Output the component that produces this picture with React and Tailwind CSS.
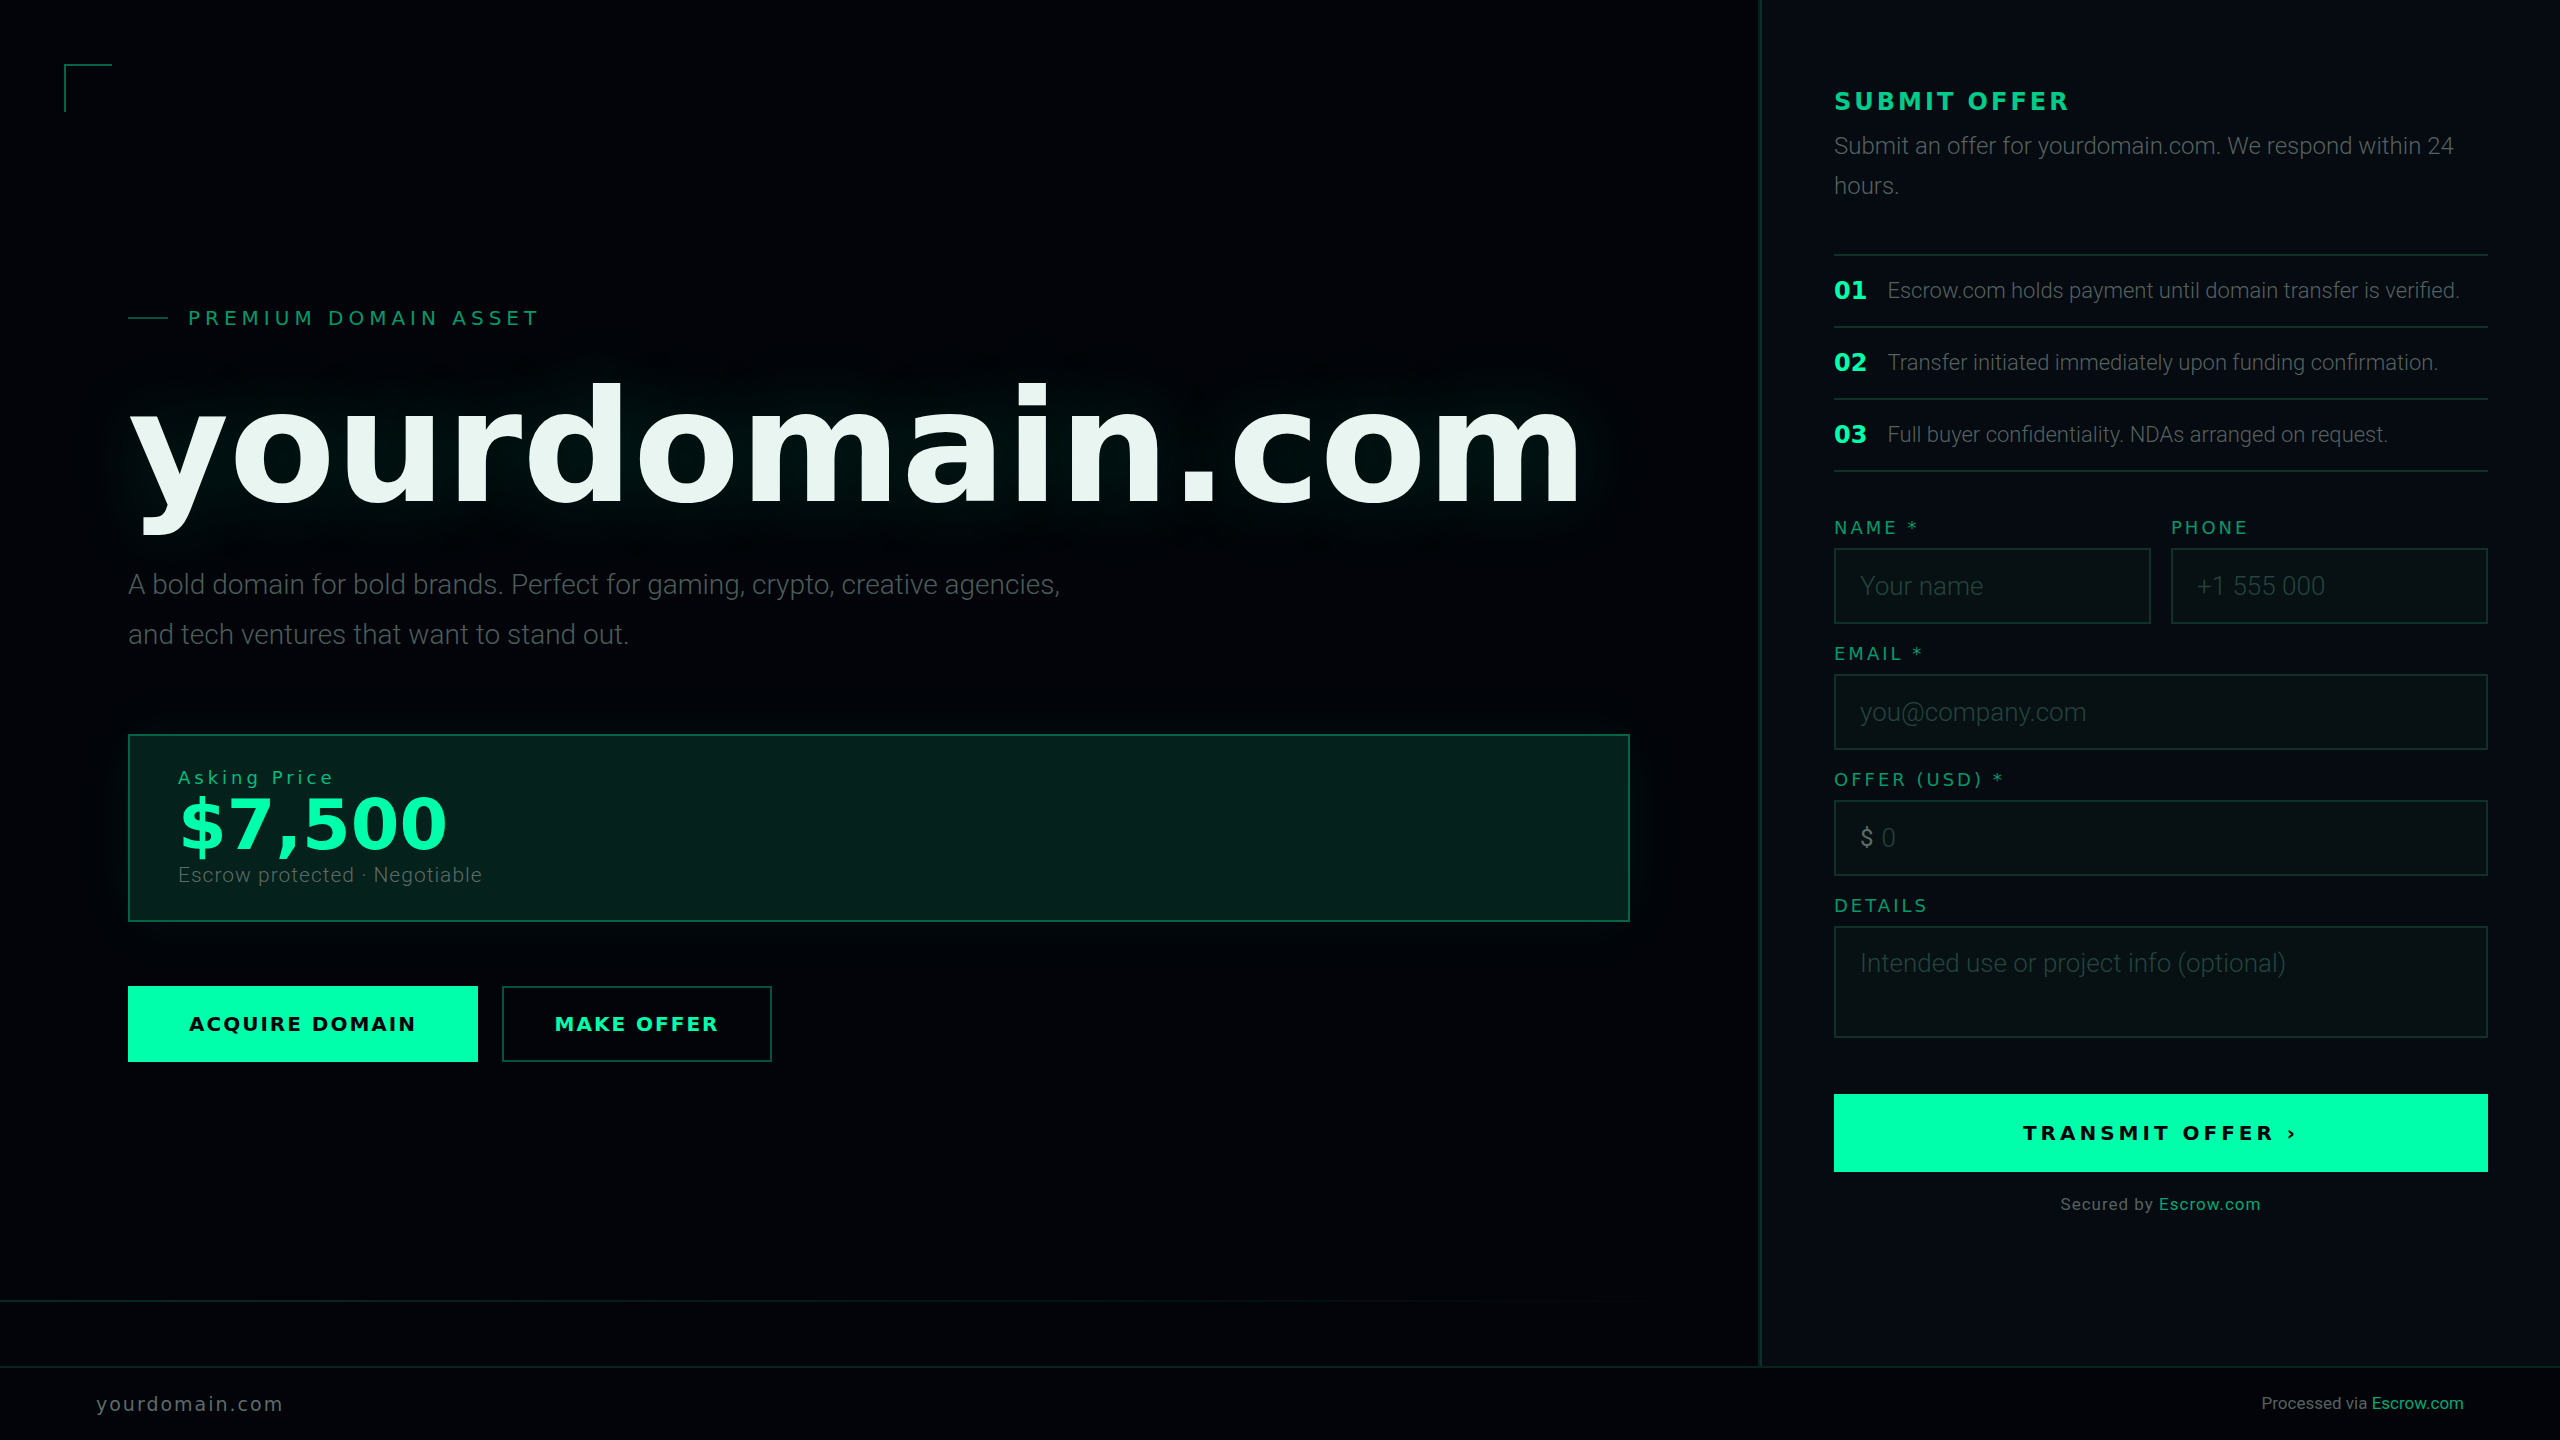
import React, { useState } from 'react';

const DOMAIN = 'yourdomain.com';

const steps = [
  { num: '01', text: 'Escrow.com holds payment until domain transfer is verified.' },
  { num: '02', text: 'Transfer initiated immediately upon funding confirmation.' },
  { num: '03', text: 'Full buyer confidentiality. NDAs arranged on request.' },
];

const fieldClass =
  "w-full border-2 border-[#12302a] bg-[#071113] px-6 text-[26px] font-light text-[#e8f5f0] outline-none placeholder:text-[#24443d] focus:border-[#00ffaa]";

const Field = ({ id, label, children }) => (
  <div className="flex flex-col gap-[10px]">
    <label
      htmlFor={id}
      className="font-['DejaVu_Sans',sans-serif] text-lg leading-5 tracking-[3px] uppercase text-[#029a6a]"
    >
      {label}
    </label>
    {children}
  </div>
);

const Hero = () => {
  return (
    <section className="relative flex flex-col justify-center border-r-2 border-[#06201b] px-32">
      {/* Corner bracket */}
      <div className="absolute top-16 left-16 size-12 border-t-2 border-l-2 border-[#026646]"></div>

      <div className="flex items-center gap-5">
        <span className="h-[2px] w-10 bg-[#04543d]"></span>
        <p className="font-['DejaVu_Sans',sans-serif] text-xl leading-7 tracking-[5px] uppercase text-[#029a6a]">
          Premium Domain Asset
        </p>
      </div>

      <h1 className="mt-8 font-['DejaVu_Sans',sans-serif] text-[155px] leading-[168px] font-bold text-[#e8f5f0] [text-shadow:0_0_80px_rgba(0,255,170,0.15)]">
        {DOMAIN}
      </h1>

      <p className="mt-7 max-w-[960px] text-[28px] leading-[50px] font-light text-[#4c5d59]">
        A bold domain for bold brands. Perfect for gaming, crypto, creative agencies, and tech
        ventures that want to stand out.
      </p>

      <div className="mt-[74px] border-2 border-[#026646] bg-[#04211c] px-12 py-[30px] shadow-[0_0_60px_rgba(0,255,170,0.05)]">
        <p className="font-['DejaVu_Sans',sans-serif] text-lg leading-6 tracking-[4px] text-[#02bb80]">
          Asking Price
        </p>
        <p className="font-['DejaVu_Sans',sans-serif] text-[70px] leading-[70px] font-bold text-[#00ffaa]">
          $7,500
        </p>
        <p className="text-[21px] leading-[30px] font-light tracking-[1px] text-[#5d6b68]">
          Escrow protected · Negotiable
        </p>
      </div>

      <div className="mt-16 flex gap-6 font-['DejaVu_Sans',sans-serif] text-xl font-bold uppercase tracking-[2px]">
        <a
          href="#offer"
          className="flex h-[76px] min-w-[350px] items-center justify-center bg-[#00ffaa] px-12 text-[#020409]"
        >
          Acquire Domain
        </a>
        <a
          href="#offer"
          className="flex h-[76px] min-w-[270px] items-center justify-center border-2 border-[#04543d] px-12 text-[#00ffaa]"
        >
          Make Offer
        </a>
      </div>

      <div className="absolute inset-x-0 bottom-16 h-[2px] bg-linear-to-r from-[#072a22] to-transparent"></div>
    </section>
  );
};

const OfferPanel = () => {
  const [form, setForm] = useState({ name: '', phone: '', email: '', offer: '', details: '' });

  const handleChange = (e) => {
    setForm({ ...form, [e.target.name]: e.target.value });
  };

  const handleSubmit = (e) => {
    e.preventDefault();
  };

  return (
    <aside id="offer" className="border-l-2 border-[#0c2f28] bg-[#060a11] px-[72px] pt-[86px] pb-16">
      <h2 className="font-['DejaVu_Sans',sans-serif] text-2xl leading-8 font-bold tracking-[3px] uppercase text-[#02cc8a]">
        Submit Offer
      </h2>
      <p className="mt-2 text-2xl leading-10 font-light text-[#55625f]">
        {`Submit an offer for ${DOMAIN}. We respond within 24 hours.`}
      </p>

      <ul className="mt-12 border-t-2 border-[#12302a]">
        {steps.map((step) => (
          <li
            key={step.num}
            className="flex h-[72px] items-center gap-5 border-b-2 border-[#12302a]"
          >
            <span className="font-['DejaVu_Sans',sans-serif] text-2xl leading-8 font-bold text-[#00ffaa]">
              {step.num}
            </span>
            <span className="text-[22px] leading-8 font-light text-[#55625f]">{step.text}</span>
          </li>
        ))}
      </ul>

      <form onSubmit={handleSubmit} className="mt-[46px] flex flex-col gap-5">
        <div className="grid grid-cols-2 gap-5">
          <Field id="name" label="Name *">
            <input
              id="name"
              name="name"
              type="text"
              placeholder="Your name"
              value={form.name}
              onChange={handleChange}
              className={`${fieldClass} h-[76px]`}
            />
          </Field>
          <Field id="phone" label="Phone">
            <input
              id="phone"
              name="phone"
              type="tel"
              placeholder="+1 555 000"
              value={form.phone}
              onChange={handleChange}
              className={`${fieldClass} h-[76px]`}
            />
          </Field>
        </div>
        <Field id="email" label="Email *">
          <input
            id="email"
            name="email"
            type="email"
            placeholder="you@company.com"
            value={form.email}
            onChange={handleChange}
            className={`${fieldClass} h-[76px]`}
          />
        </Field>
        <Field id="amount" label="Offer (USD) *">
          <div className={`${fieldClass} flex h-[76px] items-center gap-2`}>
            <span className="text-2xl font-normal text-[#5d6b68]">$</span>
            <input
              id="amount"
              name="offer"
              type="text"
              inputMode="numeric"
              placeholder="0"
              value={form.offer}
              onChange={handleChange}
              className="w-full outline-none placeholder:text-[#24443d]"
            />
          </div>
        </Field>
        <Field id="details" label="Details">
          <textarea
            id="details"
            name="details"
            placeholder="Intended use or project info (optional)"
            value={form.details}
            onChange={handleChange}
            className={`${fieldClass} h-28 resize-none py-4`}
          />
        </Field>
        <button
          type="submit"
          className="mt-9 h-[78px] bg-[#00ffaa] font-['DejaVu_Sans',sans-serif] text-xl font-bold tracking-[4px] uppercase text-[#020409]"
        >
          Transmit Offer ›
        </button>
      </form>

      <p className="mt-[18px] text-center text-[17px] leading-7 tracking-[1px] text-[#55625f]">
        Secured by{' '}
        <a href="#escrow" className="text-[#02a874]">
          Escrow.com
        </a>
      </p>
    </aside>
  );
};

const App = () => {
  return (
    <div className="flex min-h-screen flex-col bg-[#020409] font-['Roboto',sans-serif]">
      <main className="grid flex-1 grid-cols-[1fr_800px]">
        <Hero />
        <OfferPanel />
      </main>
      <footer className="flex h-[74px] items-center justify-between border-t-2 border-[#08231e] px-24">
        <span className="font-['DejaVu_Sans',sans-serif] text-[19px] tracking-[2px] text-[#5d6b68]">
          {DOMAIN}
        </span>
        <p className="text-[17px] text-[#55625f]">
          Processed via{' '}
          <a href="#escrow" className="text-[#02a874]">
            Escrow.com
          </a>
        </p>
      </footer>
    </div>
  );
};

export default App;
